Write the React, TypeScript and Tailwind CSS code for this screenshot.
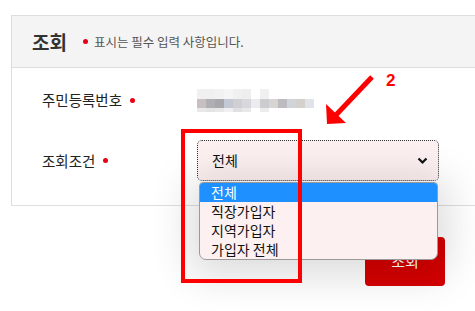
import React from 'react';

const topRow = ['#f0f0f0', '#f0f0f0', '#f2f2f2', '#f5f5f5', '#f0f0f0', '#eeeeee', '#ffffff', '#f0f0f0', '#ffffff', '#ffffff', '#ffffff', '#ffffff', '#ffffff'];
const midRow = ['#c8c0c0', '#b0b0b4', '#a8a8ac', '#c4c8d4', '#d0d0d4', '#d8d8dc', '#ececf0', '#cccccf', '#d8d4d4', '#bcbcc0', '#d0d4d8', '#d4d0cc', '#e0e4e8'];
const lowRow = ['#e8e8e8', '#e4e4e4', '#e8e8e8', '#f0f0f0', '#e0e0e4', '#e8e8e8', '#ffffff', '#ececec', '#ffffff', '#ffffff', '#ffffff', '#ffffff', '#ffffff'];

const options = ['전체', '직장가입자', '지역가입자', '가입자 전체'];

const Blurred: React.FC = () => (
    <div className="flex flex-col">
        {[topRow, midRow, lowRow].map((row, r) => (
            <div key={r} className="flex">
                {row.map((c, i) => (
                    <div key={i} className={r === 0 ? 'w-[9px] h-[10px]' : r === 1 ? 'w-[9px] h-[9px]' : 'w-[9px] h-[4px]'} style={{ backgroundColor: c }} />
                ))}
            </div>
        ))}
    </div>
);

const Dot: React.FC = () => <span className="block w-[5px] h-[5px] rounded-full bg-[#e60012]" />;

const App: React.FC = () => {
    return (
        <div className="relative w-[475px] h-[311px] overflow-hidden bg-white text-[#222]" style={{ fontFamily: '"Noto Sans CJK KR", "Noto Sans", sans-serif' }}>
            <div className="pt-[15px] pl-[11px]">
                <div className="w-[480px] border border-[#dedede]">
                    {/* header */}
                    <div className="h-[52px] bg-[#f4f4f4] border-b border-[#dedede] flex items-center pl-[20px]">
                        <span className="text-[19px] font-bold text-[#333] leading-none">조회</span>
                        <span className="ml-[16px] mr-[6px]"><Dot /></span>
                        <span className="text-[12.5px] text-[#555] leading-none mt-[2px]">표시는 필수 입력 사항입니다.</span>
                    </div>
                    {/* body */}
                    <div className="pt-[11px] pb-[24px] flex flex-col gap-[19px]">
                        <div className="h-[42px] flex items-center">
                            <div className="w-[185px] pl-[30px] flex items-center gap-[8px] text-[14.5px]">
                                주민등록번호 <Dot />
                            </div>
                            <Blurred />
                        </div>
                        <div className="h-[41px] flex items-center">
                            <div className="w-[185px] pl-[30px] flex items-center gap-[8px] text-[14.5px]">
                                조회조건 <Dot />
                            </div>
                            <div className="relative w-[242px] h-[41px] rounded-[5px] bg-[#fdf0f0] border border-dotted border-[#333] flex items-center justify-between pl-[14px] pr-[10px] text-[14px] text-[#111]">
                                <span>전체</span>
                                <svg width="11" height="8" viewBox="0 0 11 8"><path d="M1.5 1.5 L5.5 5.5 L9.5 1.5" fill="none" stroke="#111" strokeWidth="2.2" /></svg>
                                {/* open list */}
                                <div className="absolute left-[1px] top-[41px] w-[239px] rounded-b-[7px] rounded-t-[4px] overflow-hidden bg-[#fdf0f0] border border-[#9a9a9a] shadow-[0_6px_40px_10px_rgba(0,0,0,0.14)] z-20">
                                    {options.map((o, i) => (
                                        <div key={o} className={`h-[19px] leading-[19px] pl-[11px] text-[14px] ${i === 0 ? 'bg-[#1e90ff] text-white' : 'text-[#111]'}`}>{o}</div>
                                    ))}
                                </div>
                            </div>
                        </div>
                    </div>
                </div>
            </div>
            {/* action */}
            <div className="flex justify-end pr-[30px] pt-[31px]">
                <button className="w-[80px] h-[49px] rounded-[4px] bg-[#d60000] text-white text-[15px]">조회</button>
            </div>

            {/* annotations */}
            <div className="absolute left-[181px] top-[129px] w-[121px] h-[154px] border-[4px] border-[#ff0000] z-30" />
            <svg className="absolute left-0 top-0 z-30" width="475" height="311">
                <line x1="372" y1="77" x2="335" y2="116" stroke="#ff0000" strokeWidth="5" />
                <polygon points="326,104 327,124 346,123" fill="#ff0000" />
            </svg>
            <span className="absolute left-[386px] top-[68px] text-[17px] font-bold text-[#ff0000] z-30" style={{ fontFamily: '"Liberation Sans", sans-serif' }}>2</span>
        </div>
    );
};

export default App;
